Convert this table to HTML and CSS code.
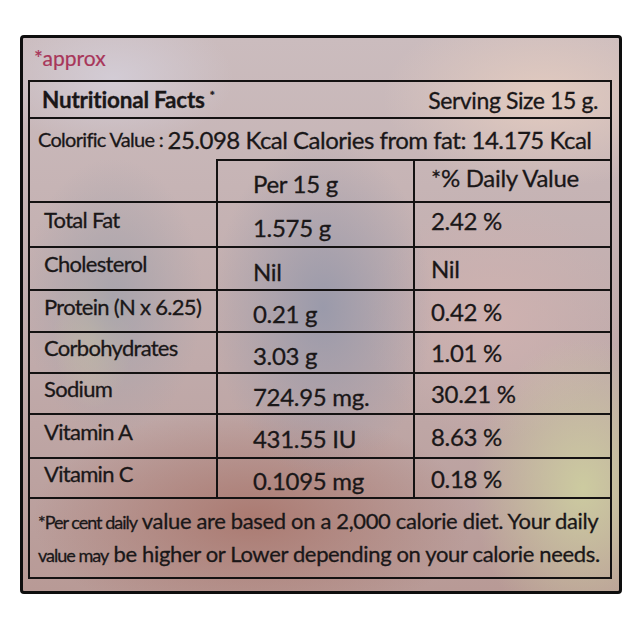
FILE: index.html
```html
<!DOCTYPE html>
<html>
<head>
<meta charset="utf-8">
<link rel="stylesheet" href="styles.css">
</head>
<body>
<div class="frame">
  <div class="approx">*approx</div>
  <div class="table">
    <div class="row-top">
      <span class="title">Nutritional Facts<sup class="mark">*</sup></span>
      <span class="serving">Serving Size 15 g.</span>
    </div>
    <div class="row-cal">
      <span class="cal-small">Colorific Value : </span><span class="cal-big">25.098 Kcal Calories from fat: 14.175 Kcal</span>
    </div>
    <div class="grid head">
      <div class="c1 blank"></div>
      <div class="c2">Per 15 g</div>
      <div class="c3 up">*% Daily Value</div>
    </div>
    <div class="grid r1">
      <div class="c1">Total Fat</div>
      <div class="c2">1.575 g</div>
      <div class="c3 up">2.42 %</div>
    </div>
    <div class="grid r2">
      <div class="c1">Cholesterol</div>
      <div class="c2">Nil</div>
      <div class="c3">Nil</div>
    </div>
    <div class="grid r3">
      <div class="c1">Protein (N x 6.25)</div>
      <div class="c2">0.21 g</div>
      <div class="c3">0.42 %</div>
    </div>
    <div class="grid r4">
      <div class="c1">Corbohydrates</div>
      <div class="c2">3.03 g</div>
      <div class="c3">1.01 %</div>
    </div>
    <div class="grid r5">
      <div class="c1">Sodium</div>
      <div class="c2">724.95 mg.</div>
      <div class="c3">30.21 %</div>
    </div>
    <div class="grid r6">
      <div class="c1">Vitamin A</div>
      <div class="c2">431.55 IU</div>
      <div class="c3">8.63 %</div>
    </div>
    <div class="grid r7">
      <div class="c1">Vitamin C</div>
      <div class="c2">0.1095 mg</div>
      <div class="c3">0.18 %</div>
    </div>
    <div class="note">
      <p><span class="note-small">*Per cent daily</span> value are based on a 2,000 calorie diet. Your daily</p>
      <p><span class="note-small">value may</span> be higher or Lower depending on your calorie needs.</p>
    </div>
  </div>
</div>
</body>
</html>
```

FILE: styles.css
```css
html, body {
  margin: 0;
  padding: 0;
  background: #ffffff;
}

body {
  font-family: Lato, "Open Sans", "DejaVu Sans", sans-serif;
  color: #1a1718;
  -webkit-text-stroke: 0.3px #1a1718;
}

.frame {
  box-sizing: border-box;
  width: 602px;
  height: 559px;
  margin: 35px 0 0 20px;
  border: 3px solid #0e0e0e;
  border-radius: 4px;
  padding: 0 7px 0 5px;
  background:
    radial-gradient(ellipse 120px 70px at 90px 40px, rgba(212,206,216,0.9), rgba(212,206,216,0) 100%),
    radial-gradient(ellipse 160px 90px at 520px 60px, rgba(228,204,192,0.95), rgba(228,204,192,0) 100%),
    radial-gradient(ellipse 110px 170px at 300px 270px, rgba(150,152,170,0.9), rgba(150,152,170,0) 100%),
    radial-gradient(ellipse 90px 140px at 90px 260px, rgba(165,163,172,0.9), rgba(165,163,172,0) 100%),
    radial-gradient(ellipse 40px 70px at 70px 300px, rgba(215,200,160,0.8), rgba(215,200,160,0) 100%),
    radial-gradient(ellipse 220px 110px at 230px 480px, rgba(168,116,106,0.85), rgba(168,116,106,0) 100%),
    radial-gradient(ellipse 110px 150px at 560px 450px, rgba(205,205,160,0.95), rgba(205,205,160,0) 100%),
    radial-gradient(ellipse 130px 120px at 470px 280px, rgba(208,178,176,0.9), rgba(208,178,176,0) 100%),
    linear-gradient(180deg, #cbbcbe 0%, #c0aaaa 60%, #b89a96 100%);
}

.approx {
  height: 42px;
  padding-left: 6px;
  font-size: 21px;
  line-height: 40px;
  color: #a8365a;
  -webkit-text-stroke: 0.2px #a8365a;
}

.table {
  border: 2px solid #141212;
}

.row-top {
  display: flex;
  justify-content: space-between;
  align-items: center;
  height: 35px;
  padding: 0 12px 0 12px;
}

.title {
  font-weight: 700;
  font-size: 22.5px;
  letter-spacing: -0.2px;
}

.mark {
  font-size: 12px;
  margin-left: 5px;
}

.serving {
  font-size: 23px;
  letter-spacing: -0.4px;
}

.row-cal {
  height: 40px;
  border-top: 2px solid #141212;
  padding: 0 4px 0 8px;
  display: flex;
  align-items: center;
  white-space: nowrap;
}

.cal-small {
  font-size: 20px;
  letter-spacing: -0.7px;
  white-space: pre;
}

.cal-big {
  font-size: 24px;
  letter-spacing: -0.5px;
}

.grid {
  display: grid;
  grid-template-columns: 186px 197px 1fr;
  height: 42px;
}

.grid .c1,
.grid .c2,
.grid .c3 {
  display: flex;
  align-items: center;
  border-top: 2px solid #141212;
  white-space: nowrap;
}

.grid .c2,
.grid .c3 {
  border-left: 2px solid #141212;
}

.grid .c1 {
  padding: 0 0 10px 14px;
  letter-spacing: -0.7px;
  font-size: 22px;
}

.grid .c2 {
  padding: 5px 0 0 35px;
  font-size: 24px;
  letter-spacing: -0.3px;
}

.grid .c3 {
  padding: 0 0 0 16px;
  font-size: 24px;
  letter-spacing: -0.3px;
}

.grid .up {
  padding-bottom: 8px;
}

.grid .blank {
  border-top: none;
}

.head {
  height: 42px;
}

.r1 { height: 45px; }
.r2 { height: 43px; }
.r3 { height: 42px; }
.r4 { height: 41px; }
.r5 { height: 41px; }
.r6 { height: 44px; }
.r7 { height: 40px; }

.note {
  border-top: 2px solid #141212;
  height: 80px;
  padding: 6px 4px 0 8px;
  box-sizing: border-box;
  font-size: 22px;
  letter-spacing: -0.35px;
}

.note p {
  margin: 0;
  line-height: 31px;
  white-space: nowrap;
}

.note-small {
  font-size: 18px;
  letter-spacing: -1px;
}
```
